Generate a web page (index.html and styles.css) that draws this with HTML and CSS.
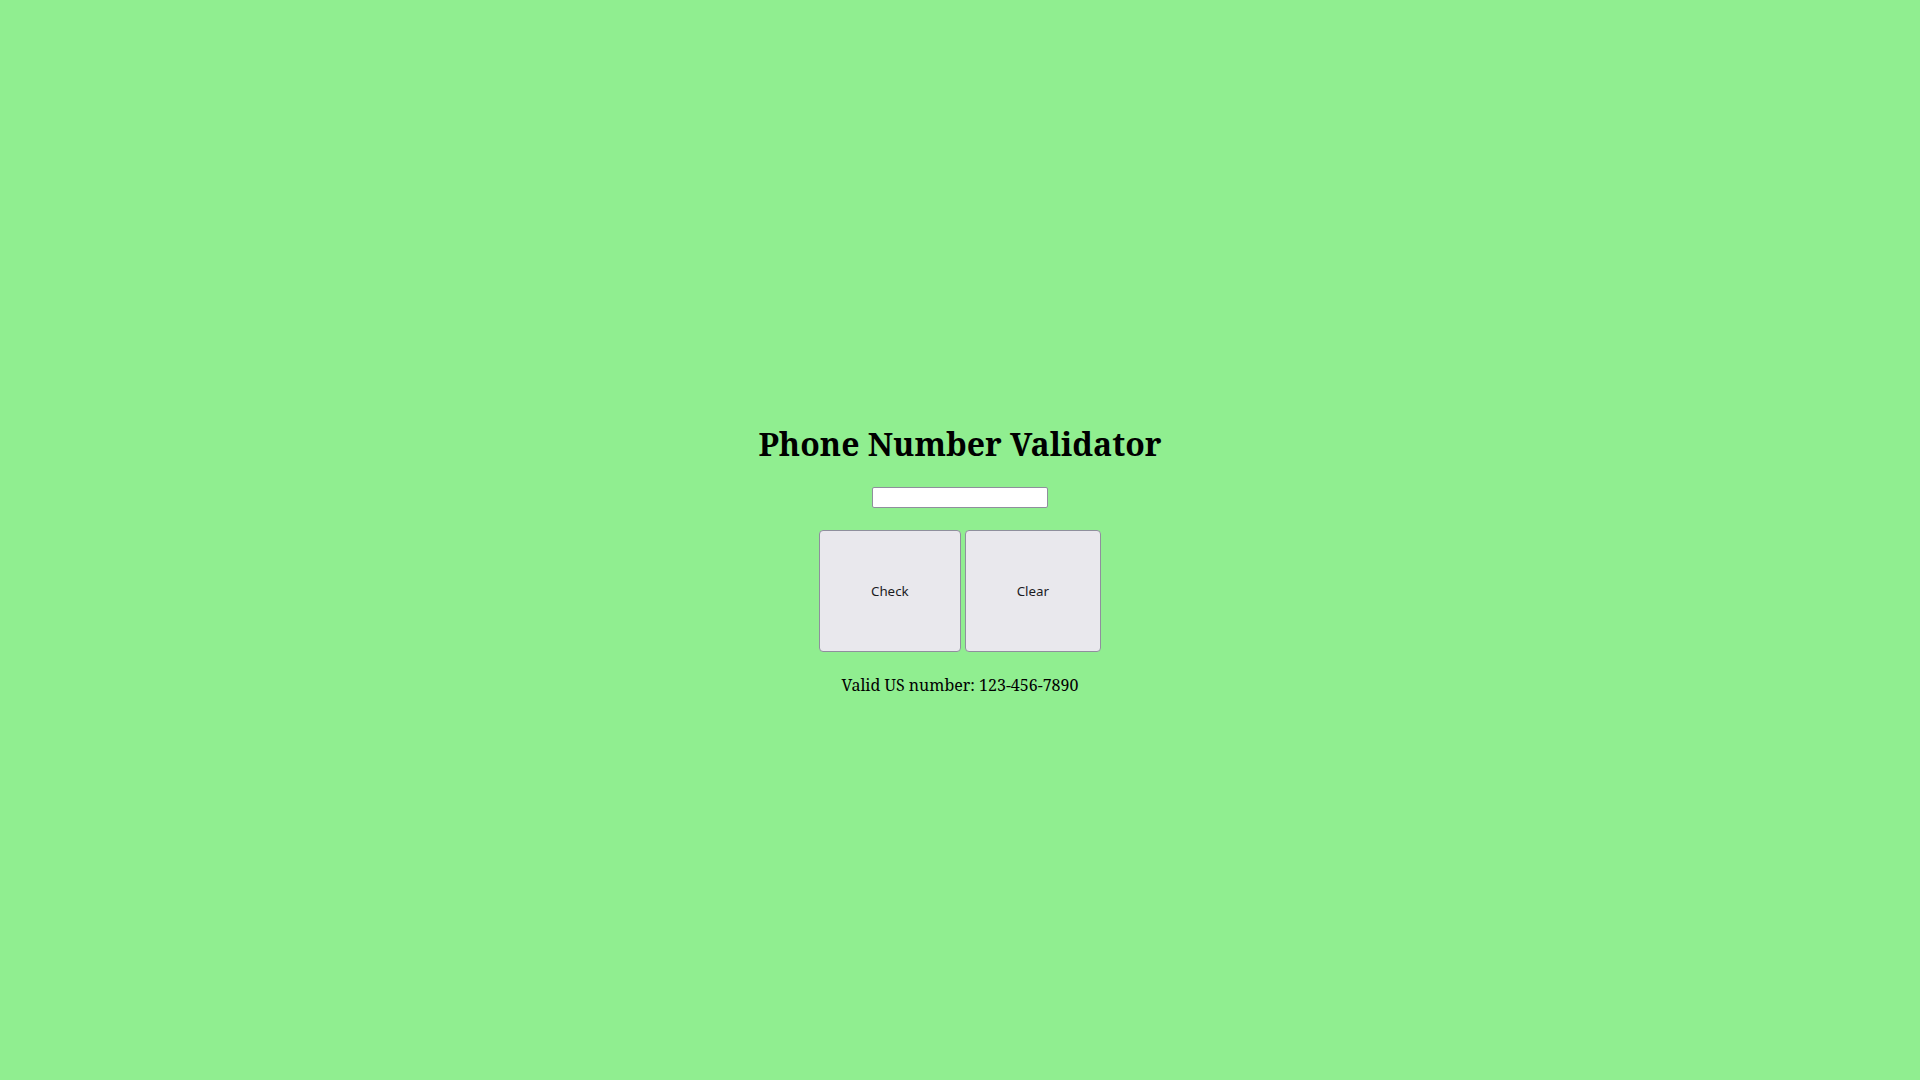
FILE: index.html
```html
<!DOCTYPE html>
<html lang="en">
<head>
<meta charset="utf-8">
<title>Phone Number Validator</title>
<link rel="stylesheet" href="styles.css">
</head>
<body>
<main class="container">
  <h1 class="title">Phone Number Validator</h1>
  <input class="user-input" type="text">
  <div class="buttons">
    <button class="btn">Check</button>
    <button class="btn">Clear</button>
  </div>
  <div class="results">Valid US number: 123-456-7890</div>
</main>
</body>
</html>
```
FILE: styles.css
```css
html, body {
  margin: 0;
  height: 100%;
}
body {
  background: #90ee90;
  font-family: "Noto Serif", "DejaVu Serif", serif;
  display: flex;
  justify-content: center;
  box-sizing: border-box;
  padding-top: 422px;
}
.container {
  display: flex;
  flex-direction: column;
  align-items: center;
}
.title {
  font-size: 32px;
  line-height: 44px;
  margin: 0 0 21px;
}
.user-input {
  box-sizing: border-box;
  width: 176px;
  height: 21px;
  border: 1px solid #8f8f9d;
  border-radius: 2px;
  background: #fff;
  margin-bottom: 22px;
}
.buttons {
  display: flex;
  gap: 4px;
  margin-bottom: 22px;
}
.btn {
  font-family: "Noto Sans", "Open Sans", sans-serif;
  font-size: 13.33px;
  line-height: 18px;
  color: #1b1b1f;
  background: #e9e8ed;
  border: 1px solid #8f8f9d;
  border-radius: 4px;
  padding: 51px;
}
.results {
  font-size: 16px;
  line-height: 22px;
}
```
